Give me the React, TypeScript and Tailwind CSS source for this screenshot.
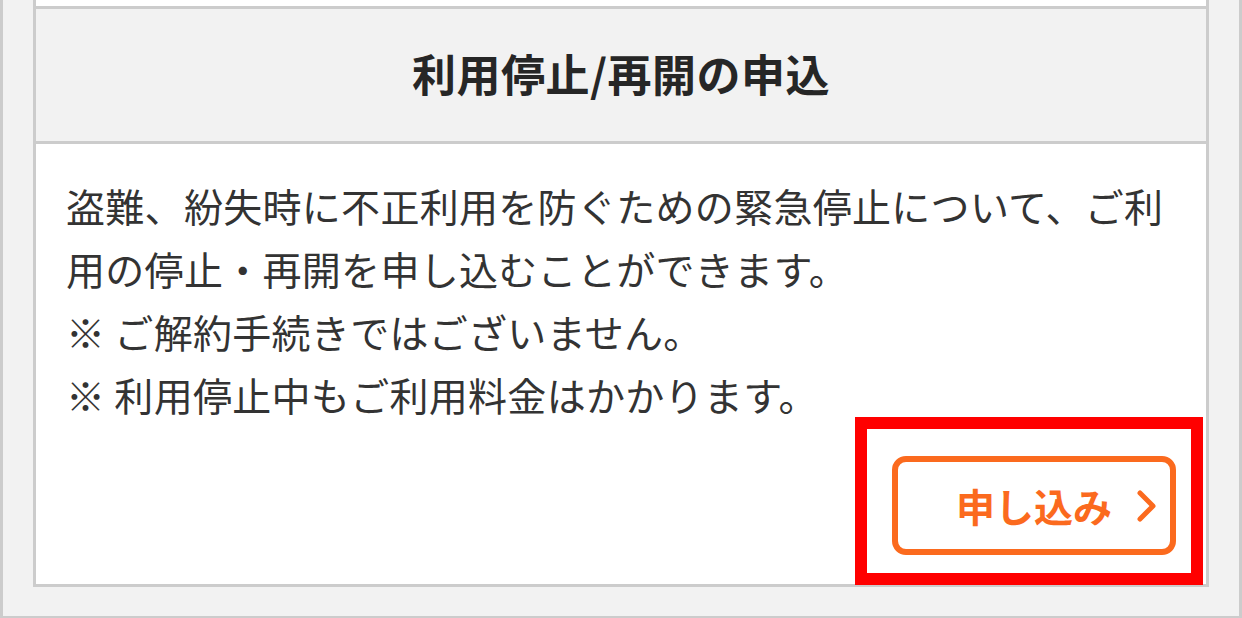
const jp = { fontFamily: '"Noto Sans CJK JP", "Noto Sans", sans-serif' };

const Chevron = () => (
  <svg width="22" height="32" viewBox="0 0 22 32" fill="none" className="absolute right-[12px] top-1/2 -translate-y-1/2">
    <path d="M4 3 L17 16 L4 29" stroke="#fb6a1e" strokeWidth="5" strokeLinecap="round" strokeLinejoin="round" />
  </svg>
);

const App = () => {
  return (
    <div
      className="relative w-[1242px] h-[618px] bg-[#f2f2f2] border-x-[3px] border-b-[2px] border-[#cccccc] px-[30px] pb-[29px] flex flex-col"
      style={jp}
    >
      <div className="flex-1 flex flex-col border-x-[3px] border-b-[3px] border-[#cccccc]">
        <div className="h-[6px] bg-white" />
        <div className="h-[138px] border-y-[3px] border-[#cccccc] bg-[#f2f2f2] flex items-center justify-center">
          <h2 className="text-[44px] leading-[63px] font-bold tracking-[0.5px] text-[#262626] -mt-[3px]">利用停止/再開の申込</h2>
        </div>
        <div className="flex-1 bg-white px-[30px] pt-[30px] pb-[29px] flex flex-col">
          <div className="text-[39px] leading-[63px] text-[#333333] whitespace-nowrap tracking-[0.3px]">
            <p>盗難、紛失時に不正利用を防ぐための緊急停止について、ご利<br />用の停止・再開を申し込むことができます。</p>
            <p>※ ご解約手続きではございません。</p>
            <p>※ 利用停止中もご利用料金はかかります。</p>
          </div>
          <div className="mt-[30px] flex justify-end">
            <button className="relative w-[284px] h-[99px] border-[6px] border-[#fb6a1e] rounded-[14px] bg-white flex items-center justify-center">
              <span className="text-[39px] font-bold text-[#fb6a1e] leading-none">申し込み</span>
              <Chevron />
            </button>
          </div>
        </div>
      </div>
      <div className="absolute left-[852px] top-[417px] w-[348px] h-[168px] border-[12px] border-[#ff0000] pointer-events-none" />
    </div>
  );
};

export default App;
